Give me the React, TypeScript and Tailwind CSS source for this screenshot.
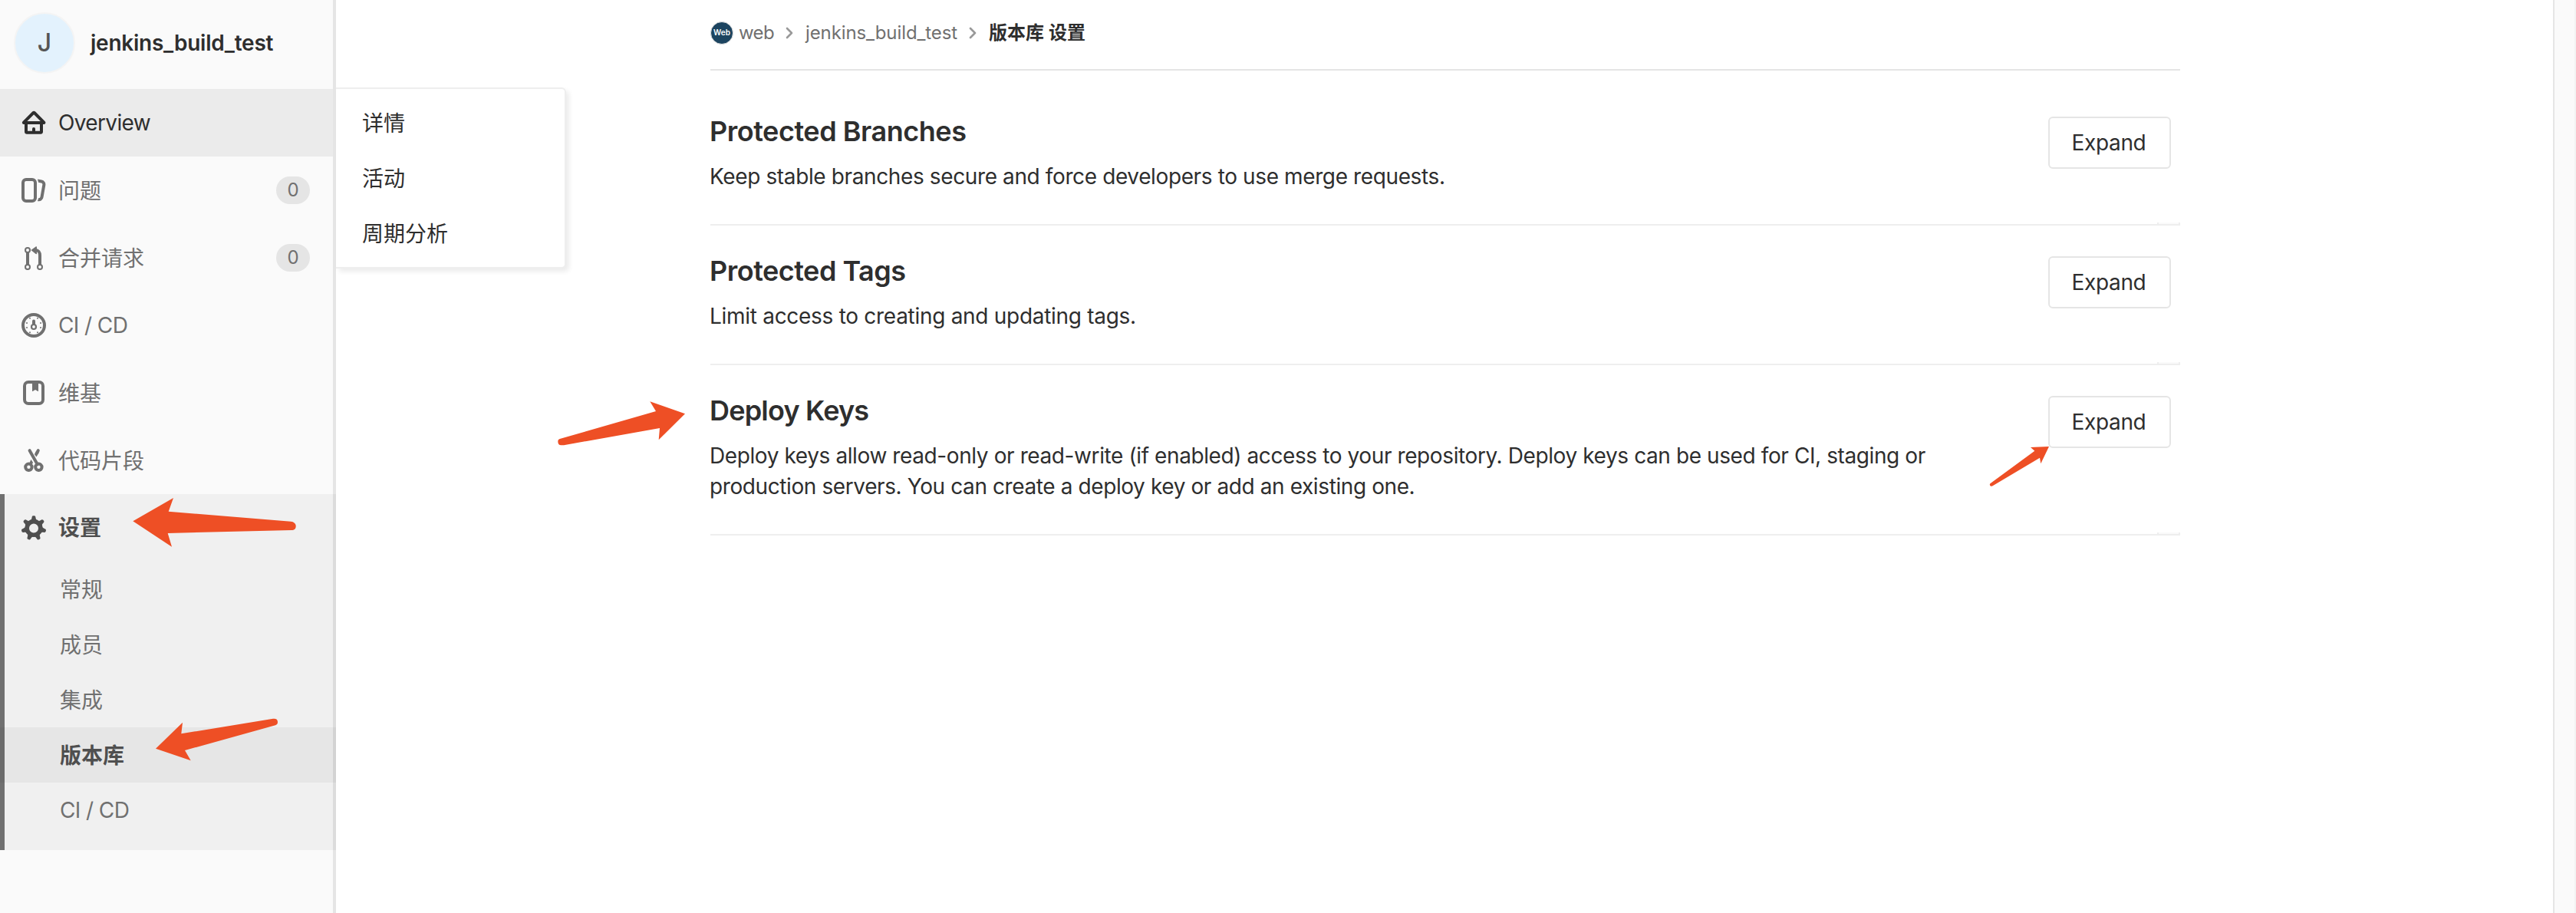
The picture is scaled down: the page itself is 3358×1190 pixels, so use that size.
import React from "react";

type IconProps = { children: React.ReactNode };

const Icon = ({ children }: IconProps) => (
  <svg viewBox="0 0 16 16" className="size-8 shrink-0 fill-current">
    {children}
  </svg>
);

const HomeIcon = () => (
  <Icon>
    <path
      fillRule="evenodd"
      d="M3.706 7h8.725L8.069 2.585 3.706 7zM7 13.369V12a1 1 0 0 1 2 0v1.369h3V9H4v4.369h3zM14 9v4.836c0 .833-.657 1.533-1.5 1.533h-9c-.843 0-1.5-.7-1.5-1.533V9h-.448a1.1 1.1 0 0 1-.783-1.873L6.934.887a1.5 1.5 0 0 1 2.269 0l6.165 6.24A1.1 1.1 0 0 1 14.585 9H14z"
    />
  </Icon>
);

const IssuesIcon = () => (
  <Icon>
    <path
      fillRule="evenodd"
      d="M10.458 15.012l.311.055a3 3 0 0 0 3.476-2.433l1.389-7.879A3 3 0 0 0 13.2 1.28L11.23.933a3.002 3.002 0 0 0-.824-.031c.364.59.58 1.28.593 2.02l1.854.328a1 1 0 0 1 .811 1.158l-1.389 7.879a1 1 0 0 1-1.158.81l-.118-.02a3.98 3.98 0 0 1-.541 1.935zM3 0h4a3 3 0 0 1 3 3v10a3 3 0 0 1-3 3H3a3 3 0 0 1-3-3V3a3 3 0 0 1 3-3zm0 2a1 1 0 0 0-1 1v10a1 1 0 0 0 1 1h4a1 1 0 0 0 1-1V3a1 1 0 0 0-1-1H3z"
    />
  </Icon>
);

const MergeIcon = () => (
  <Icon>
    <g fill="none" stroke="currentColor">
      <path strokeWidth="2" d="M4 4.2v8.6M12 12.8V6.5C12 4.4 11 3 9.2 3" />
      <circle cx="4" cy="3" r="1.5" strokeWidth="1" />
      <circle cx="4" cy="14" r="1.5" strokeWidth="1" />
      <circle cx="12" cy="14" r="1.5" strokeWidth="1" />
    </g>
    <path d="M6.2 3 9.3.7c.3-.2.7 0 .7.4v4c0 .4-.4.6-.7.4z" />
  </Icon>
);

const GaugeIcon = () => (
  <Icon>
    <circle cx="8" cy="8" r="7" fill="none" stroke="currentColor" strokeWidth="2" />
    <circle cx="8" cy="9" r="1.5" fill="none" stroke="currentColor" strokeWidth="1.1" />
    <path d="M7 7.6V5.3a1 1 0 0 1 2 0v2.3z" />
    {[
      [5.5, 3.4],
      [10.5, 3.4],
      [3.5, 6.5],
      [12.5, 6.5],
      [3.5, 9.5],
      [12.5, 9.5],
      [5.5, 12.6],
      [10.5, 12.6],
    ].map(([x, y]) => (
      <circle key={`${x}-${y}`} cx={x} cy={y} r="0.5" />
    ))}
  </Icon>
);

const WikiIcon = () => (
  <Icon>
    <rect x="2" y="1" width="12" height="14" rx="2.5" fill="none" stroke="currentColor" strokeWidth="2" />
    <path d="M7 1.5h4v5.2c0 .3-.3.4-.5.2L9 6 7.5 6.9c-.2.2-.5.1-.5-.2z" />
  </Icon>
);

const ScissorsIcon = () => (
  <Icon>
    <g fill="none" stroke="currentColor" strokeWidth="2">
      <circle cx="4.7" cy="12.4" r="2.1" />
      <circle cx="11.2" cy="12.4" r="2.1" />
      <path strokeLinecap="round" d="M5.3 1.6 10.4 10.6M10.9 1.6 9.9 3.3" />
    </g>
    <path d="M8.4 4 9.7 5.700 11.500 2.900 9.900 1.900zM6.200 7.500 7.500 9.400 6.800 11 4.900 10.400z" />
  </Icon>
);

const GearIcon = () => (
  <Icon>
    <circle cx="8" cy="8.2" r="4.4" fill="none" stroke="currentColor" strokeWidth="2.8" />
    {[0, 1, 2, 3, 4, 5, 6].map((n) => (
      <path
        key={n}
        transform={`rotate(${(n * 360) / 7} 8 8.2)`}
        d="M5.5 3.6C6.4 3 6.7 2 6.8 1.1 6.9.4 7.2.1 7.7.1h.6c.5 0 .8.3.9 1 .1.9.4 1.9 1.3 2.5z"
      />
    ))}
  </Icon>
);

const Chevron = () => (
  <svg viewBox="0 0 10 16" className="h-4 w-2.5 shrink-0 fill-none stroke-[#999999]">
    <path d="M2 2l6 6-6 6" strokeWidth="2.6" strokeLinecap="round" strokeLinejoin="round" />
  </svg>
);

const Badge = () => (
  <span className="mr-[34px] ml-auto flex h-9 w-11 items-center justify-center rounded-[18px] bg-[#e5e5e5] text-2xl leading-9">
    0
  </span>
);

const navItems = [
  { icon: <IssuesIcon />, label: "问题", badge: true },
  { icon: <MergeIcon />, label: "合并请求", badge: true },
  { icon: <GaugeIcon />, label: "CI / CD", badge: false },
  { icon: <WikiIcon />, label: "维基", badge: false },
  { icon: <ScissorsIcon />, label: "代码片段", badge: false },
];

const Sidebar = () => (
  <aside className="flex w-[438px] shrink-0 flex-col bg-[#fafafa] text-[#707070] shadow-[inset_-4px_0_0_#e5e5e5]">
    <div className="flex h-[116px] items-center gap-5 pb-1 pl-[18px]">
      <span className="flex size-20 items-center justify-center rounded-full border-2 border-[#f4f4f4] bg-[#e3f2fd] text-[32px] font-medium text-[#555555]">
        J
      </span>
      <span className="font-semibold tracking-[-0.24px] text-[#2e2e2e]">jenkins_build_test</span>
    </div>
    <div className="mr-1 flex h-[88px] items-center gap-4 bg-[#ebebeb] pl-7 tracking-[-0.65px] text-[#2e2e2e]">
      <HomeIcon />
      Overview
    </div>
    {navItems.map((item) => (
      <div key={item.label} className="flex h-[88px] items-center gap-4 pl-7">
        {item.icon}
        <span className={item.label === "CI / CD" ? "tracking-[-0.6px]" : "pt-px"}>{item.label}</span>
        {item.badge && <Badge />}
      </div>
    ))}
    <div className="bg-black/[0.04] pb-4 shadow-[inset_6px_0_0_#707070]">
      <div className="flex h-[88px] items-center gap-4 pl-7 font-semibold text-[#4f4f4f]">
        <GearIcon />
        设置
      </div>
      {["常规", "成员", "集成"].map((label) => (
        <div key={label} className="flex h-[72px] items-center pt-0.5 pl-[78px]">
          {label}
        </div>
      ))}
      <div className="flex h-[72px] items-center bg-black/[0.04] pt-0.5 pl-[78px] font-semibold text-[#4f4f4f]">
        版本库
      </div>
      <div className="flex h-[72px] items-center pl-[78px] tracking-[-0.6px]">CI / CD</div>
    </div>
  </aside>
);

const Flyout = () => (
  <div className="absolute top-[114px] left-[438px] h-[236px] w-[300px] rounded-r-md border-2 border-l-0 border-[#eeeeee] bg-white py-2 shadow-[4px_4px_6px_rgba(0,0,0,0.08)]">
    {["详情", "活动", "周期分析"].map((label) => (
      <div key={label} className="flex h-[72px] items-center pt-0.5 pl-[34px]">
        {label}
      </div>
    ))}
  </div>
);

const sections = [
  {
    title: "Protected Branches",
    titleClass: "tracking-[-0.47px]",
    text: "Keep stable branches secure and force developers to use merge requests.",
    textClass: "tracking-[-0.38px]",
  },
  {
    title: "Protected Tags",
    titleClass: "tracking-[-0.5px]",
    text: "Limit access to creating and updating tags.",
    textClass: "tracking-[-0.29px]",
  },
  {
    title: "Deploy Keys",
    titleClass: "tracking-[-0.8px]",
    text: "Deploy keys allow read-only or read-write (if enabled) access to your repository. Deploy keys can be used for CI, staging or production servers. You can create a deploy key or add an existing one.",
    textClass: "tracking-[-0.4px]",
  },
];

const Content = () => (
  <main className="ml-[488px] flex w-[1916px] flex-col">
    <nav className="mb-5 flex h-[92px] items-center border-b-2 border-[#e5e5e5] pb-1 text-2xl text-[#707070]">
      <span className="mr-[7px] flex size-[30px] items-center justify-center rounded-full border border-[#dddddd] bg-[#1c4460] text-[10px] font-semibold text-white">
        Web
      </span>
      <span className="w-[61px] tracking-[-0.6px]">web</span>
      <Chevron />
      <span className="ml-4 w-[213px] tracking-[-0.1px]">jenkins_build_test</span>
      <Chevron />
      <span className="ml-4 font-semibold text-[#2e2e2e]">版本库 设置</span>
    </nav>
    {sections.map((s) => (
      <section
        key={s.title}
        className="relative flex items-start justify-between border-b-2 border-[#eeeeee] pt-10 pr-3 pb-[42px]"
      >
        <div className="-ml-px w-[1600px]">
          <h4 className={`mb-5 text-4xl leading-[38px] font-semibold ${s.titleClass}`}>{s.title}</h4>
          <p className={`leading-10 ${s.textClass}`}>{s.text}</p>
        </div>
        <button className="-mb-2 h-[68px] w-40 rounded-md border-2 border-[#e5e5e5] bg-white pr-0.5 tracking-[-0.36px]">
          Expand
        </button>
        <span className="absolute right-0 bottom-0 h-0.5 w-[30px] border-x-2 border-[#eeeeee] bg-[#fafafa]" />
      </section>
    ))}
  </main>
);

const Arrows = () => (
  <>
    <svg viewBox="170 645 220 72" className="absolute top-[645px] left-[170px] h-[72px] w-[220px] fill-[#ee4f25]">
      <path d="M173.3 679.3 226 649l-6.3 17.7L379 679.7c4 .3 6.7 2.8 6.7 6 0 3.3-2 5.3-5.7 5.3l-161.3 4 5.3 17.7z" />
    </svg>
    <svg viewBox="200 930 170 66" className="absolute top-[930px] left-[200px] h-[66px] w-[170px] fill-[#ee4f25]">
      <path d="M203 975.7 238 941.7l-1.7 14.6L356 936.7c4-.4 6 1 6 4.3 0 2.3-.8 3.5-3 4.3L241 978l7.7 13.3z" />
    </svg>
    <svg viewBox="720 518 180 68" className="absolute top-[518px] left-[720px] h-[68px] w-[180px] fill-[#ee4f25]">
      <path d="M893 539.3 847.3 523.3 855 536 730.7 571.7c-2.4.6-3.4 1.6-3.4 3.6 0 3.4 1.5 5.2 4.7 5l3-.1L860 558l-1.3 15.3z" />
    </svg>
    <svg viewBox="2590 578 84 60" className="absolute top-[578px] left-[2590px] h-[60px] w-[84px] fill-[#ee4f25]">
      <path d="M2671 582 2647 583l5.3 4.7L2594.7 630c-1 .8-1 1.6-.7 2.5.4.9 1.2 1.2 2 1.2.8 0 1.4-.3 2-.7L2659 596.7l1.3 7.6z" />
    </svg>
  </>
);

export default function App() {
  return (
    <div className="relative flex h-[1190px] w-full overflow-hidden bg-white font-['Inter','Noto_Sans_CJK_SC',sans-serif] text-[28px] leading-10 text-[#2e2e2e]">
      <Sidebar />
      <Content />
      <div className="ml-auto w-[30px] border-r-2 border-l-2 border-r-[#f2f2f2] border-l-[#e5e5e5] bg-[#fafafa]" />
      <Flyout />
      <Arrows />
    </div>
  );
}
